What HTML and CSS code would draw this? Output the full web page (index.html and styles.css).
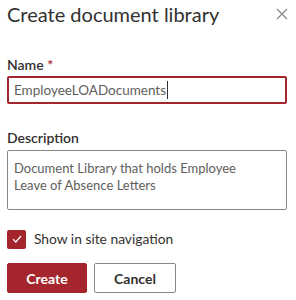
FILE: index.html
```html
<!DOCTYPE html>
<html lang="en">
<head>
  <meta charset="UTF-8" />
  <title>Create document library</title>
  <link rel="stylesheet" href="styles.css">
</head>
<body>
  <div class="panel">
    <div class="panel-header">
      <h1>Create document library</h1>
      <button class="close" aria-label="Close">
        <svg width="12" height="12" viewBox="0 0 12 12">
          <path d="M1 1L11 11M11 1L1 11" stroke="#8a8886" stroke-width="1.2" fill="none" />
        </svg>
      </button>
    </div>

    <label class="field-label">Name <span class="req">*</span></label>
    <div class="input input-error">EmployeeLOADocuments<span class="caret"></span></div>

    <label class="field-label desc-label">Description</label>
    <div class="textarea">Document Library that holds Employee Leave of Absence Letters</div>

    <div class="check-row">
      <span class="checkbox">
        <svg width="12" height="12" viewBox="0 0 12 12">
          <path d="M2 6.2L4.8 9L10 3" stroke="#fff" stroke-width="1.2" fill="none" />
        </svg>
      </span>
      <span class="check-text">Show in site navigation</span>
    </div>

    <div class="actions">
      <button class="btn btn-primary">Create</button>
      <button class="btn btn-default">Cancel</button>
    </div>
  </div>
</body>
</html>
```

FILE: styles.css
```css
html, body {
  margin: 0;
  padding: 0;
  background: #fff;
}
body {
  font-family: Lato, "Open Sans", sans-serif;
  color: #323130;
}

.panel {
  padding: 0 9px 0 7px;
}

.panel-header {
  display: flex;
  align-items: center;
  justify-content: space-between;
}

h1 {
  margin: 0;
  font-size: 20px;
  font-weight: 400;
  line-height: 28px;
}

.close {
  border: none;
  background: none;
  padding: 0;
  margin-right: -1px;
  display: flex;
}

.field-label {
  display: block;
  margin-top: 27px;
  font-size: 14px;
  font-weight: 600;
  line-height: 20px;
}

.req {
  color: #a4262c;
}

.input {
  margin-top: 1px;
  height: 24px;
  border: 2px solid #a4262c;
  border-radius: 2px;
  padding: 0 5px;
  font-size: 13.5px;
  line-height: 24px;
  color: #605e5c;
}

.caret {
  display: inline-block;
  width: 1px;
  height: 18px;
  margin-left: 1px;
  background: #323130;
  vertical-align: -4px;
}

.desc-label {
  margin-top: 24px;
}

.textarea {
  box-sizing: border-box;
  margin-top: 2px;
  height: 60px;
  border: 1px solid #8a8886;
  border-radius: 2px;
  padding: 9px 24px 0 6px;
  font-size: 13px;
  line-height: 17px;
  color: #605e5c;
}

.check-row {
  margin-top: 19px;
  display: flex;
  align-items: center;
  gap: 8px;
}

.checkbox {
  width: 19px;
  height: 19px;
  border-radius: 2px;
  background: #a4262c;
  display: flex;
  align-items: center;
  justify-content: center;
}

.check-text {
  font-size: 13.8px;
  line-height: 20px;
  color: #323130;
}

.actions {
  margin-top: 14px;
  display: flex;
  gap: 7px;
}

.btn {
  height: 30px;
  border-radius: 2px;
  font-family: Lato, "Open Sans", sans-serif;
  font-size: 14px;
  font-weight: 700;
  padding: 0;
}

.btn-primary {
  width: 80px;
  background: #a4262c;
  border: 1px solid #a4262c;
  color: #fff;
}

.btn-default {
  width: 82px;
  background: #fff;
  border: 1px solid #8a8886;
  color: #323130;
}
```
